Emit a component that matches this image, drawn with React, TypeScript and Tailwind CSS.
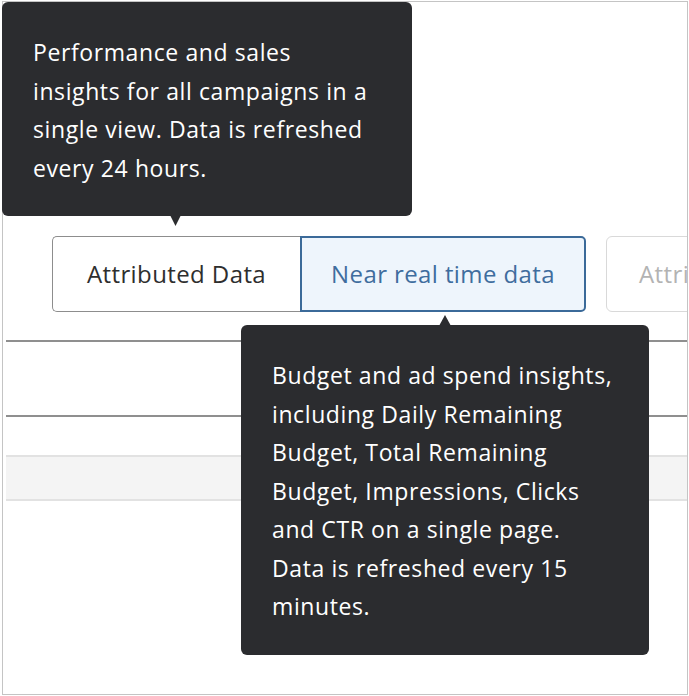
import React from "react";

const font = { fontFamily: "'Open Sans', Lato, sans-serif" };

export default function App() {
  return (
    <div
      className="relative w-[689px] h-[696px] bg-white overflow-hidden pt-px pl-[2px] pr-px pb-px"
      style={font}
    >
      <div className="h-full border border-[#c4c4c4] overflow-hidden">
        <div className="pt-[234px] pl-[49px] flex items-stretch whitespace-nowrap">
          <div className="flex h-[76px] shrink-0">
            <button className="w-[248px] h-full flex items-center justify-center border border-[#8d8d8d] border-r-0 rounded-l-[5px] bg-white text-[#2e2e2e] text-[24px] tracking-[0.4px]">
              Attributed Data
            </button>
            <button className="w-[286px] h-full flex items-center justify-center border-2 border-[#3b6a99] rounded-r-[5px] bg-[#eef5fc] text-[#3f6d9e] text-[24px] tracking-[0.4px]">
              Near real time data
            </button>
          </div>
          <button className="ml-[20px] w-[200px] h-[76px] shrink-0 flex items-center pl-[32px] border border-[#d9d9d9] rounded-[6px] bg-white text-[#b3b3b3] text-[24px] tracking-[0.4px]">
            Attributed
          </button>
        </div>
        <div className="mt-[28px] ml-[3px] h-[2px] bg-[#8f8f8f]" />
        <div className="mt-[73px] ml-[3px] h-[2px] bg-[#8f8f8f]" />
        <div className="mt-[38px] ml-[3px] h-[46px] bg-[#f4f4f4] border-y-2 border-[#e2e2e2]" />
      </div>

      {/* Tooltip 1 */}
      <div className="absolute left-[2px] top-[2px] w-[410px] h-[214px] rounded-[6px] bg-[#2b2c2f] text-white text-[23px] tracking-[0.6px] leading-[38.5px] pl-[31px] pt-[31px]">
        Performance and sales
        <br />
        insights for all campaigns in a
        <br />
        single view. Data is refreshed
        <br />
        every 24 hours.
      </div>
      <svg className="absolute left-[170px] top-[215px]" width="11" height="11" viewBox="0 0 11 11">
        <polygon points="0,0 11,0 5.5,11" fill="#2b2c2f" />
      </svg>

      {/* Tooltip 2 */}
      <svg className="absolute left-[439px] top-[315px]" width="12" height="11" viewBox="0 0 12 11">
        <polygon points="0,11 12,11 6,0" fill="#2b2c2f" />
      </svg>
      <div className="absolute left-[241px] top-[325px] w-[408px] h-[330px] rounded-[6px] bg-[#2b2c2f] text-white text-[23px] tracking-[0.6px] leading-[38.5px] pl-[31px] pt-[31px]">
        Budget and ad spend insights,
        <br />
        including Daily Remaining
        <br />
        Budget, Total Remaining
        <br />
        Budget, Impressions, Clicks
        <br />
        and CTR on a single page.
        <br />
        Data is refreshed every 15
        <br />
        minutes.
      </div>
    </div>
  );
}
